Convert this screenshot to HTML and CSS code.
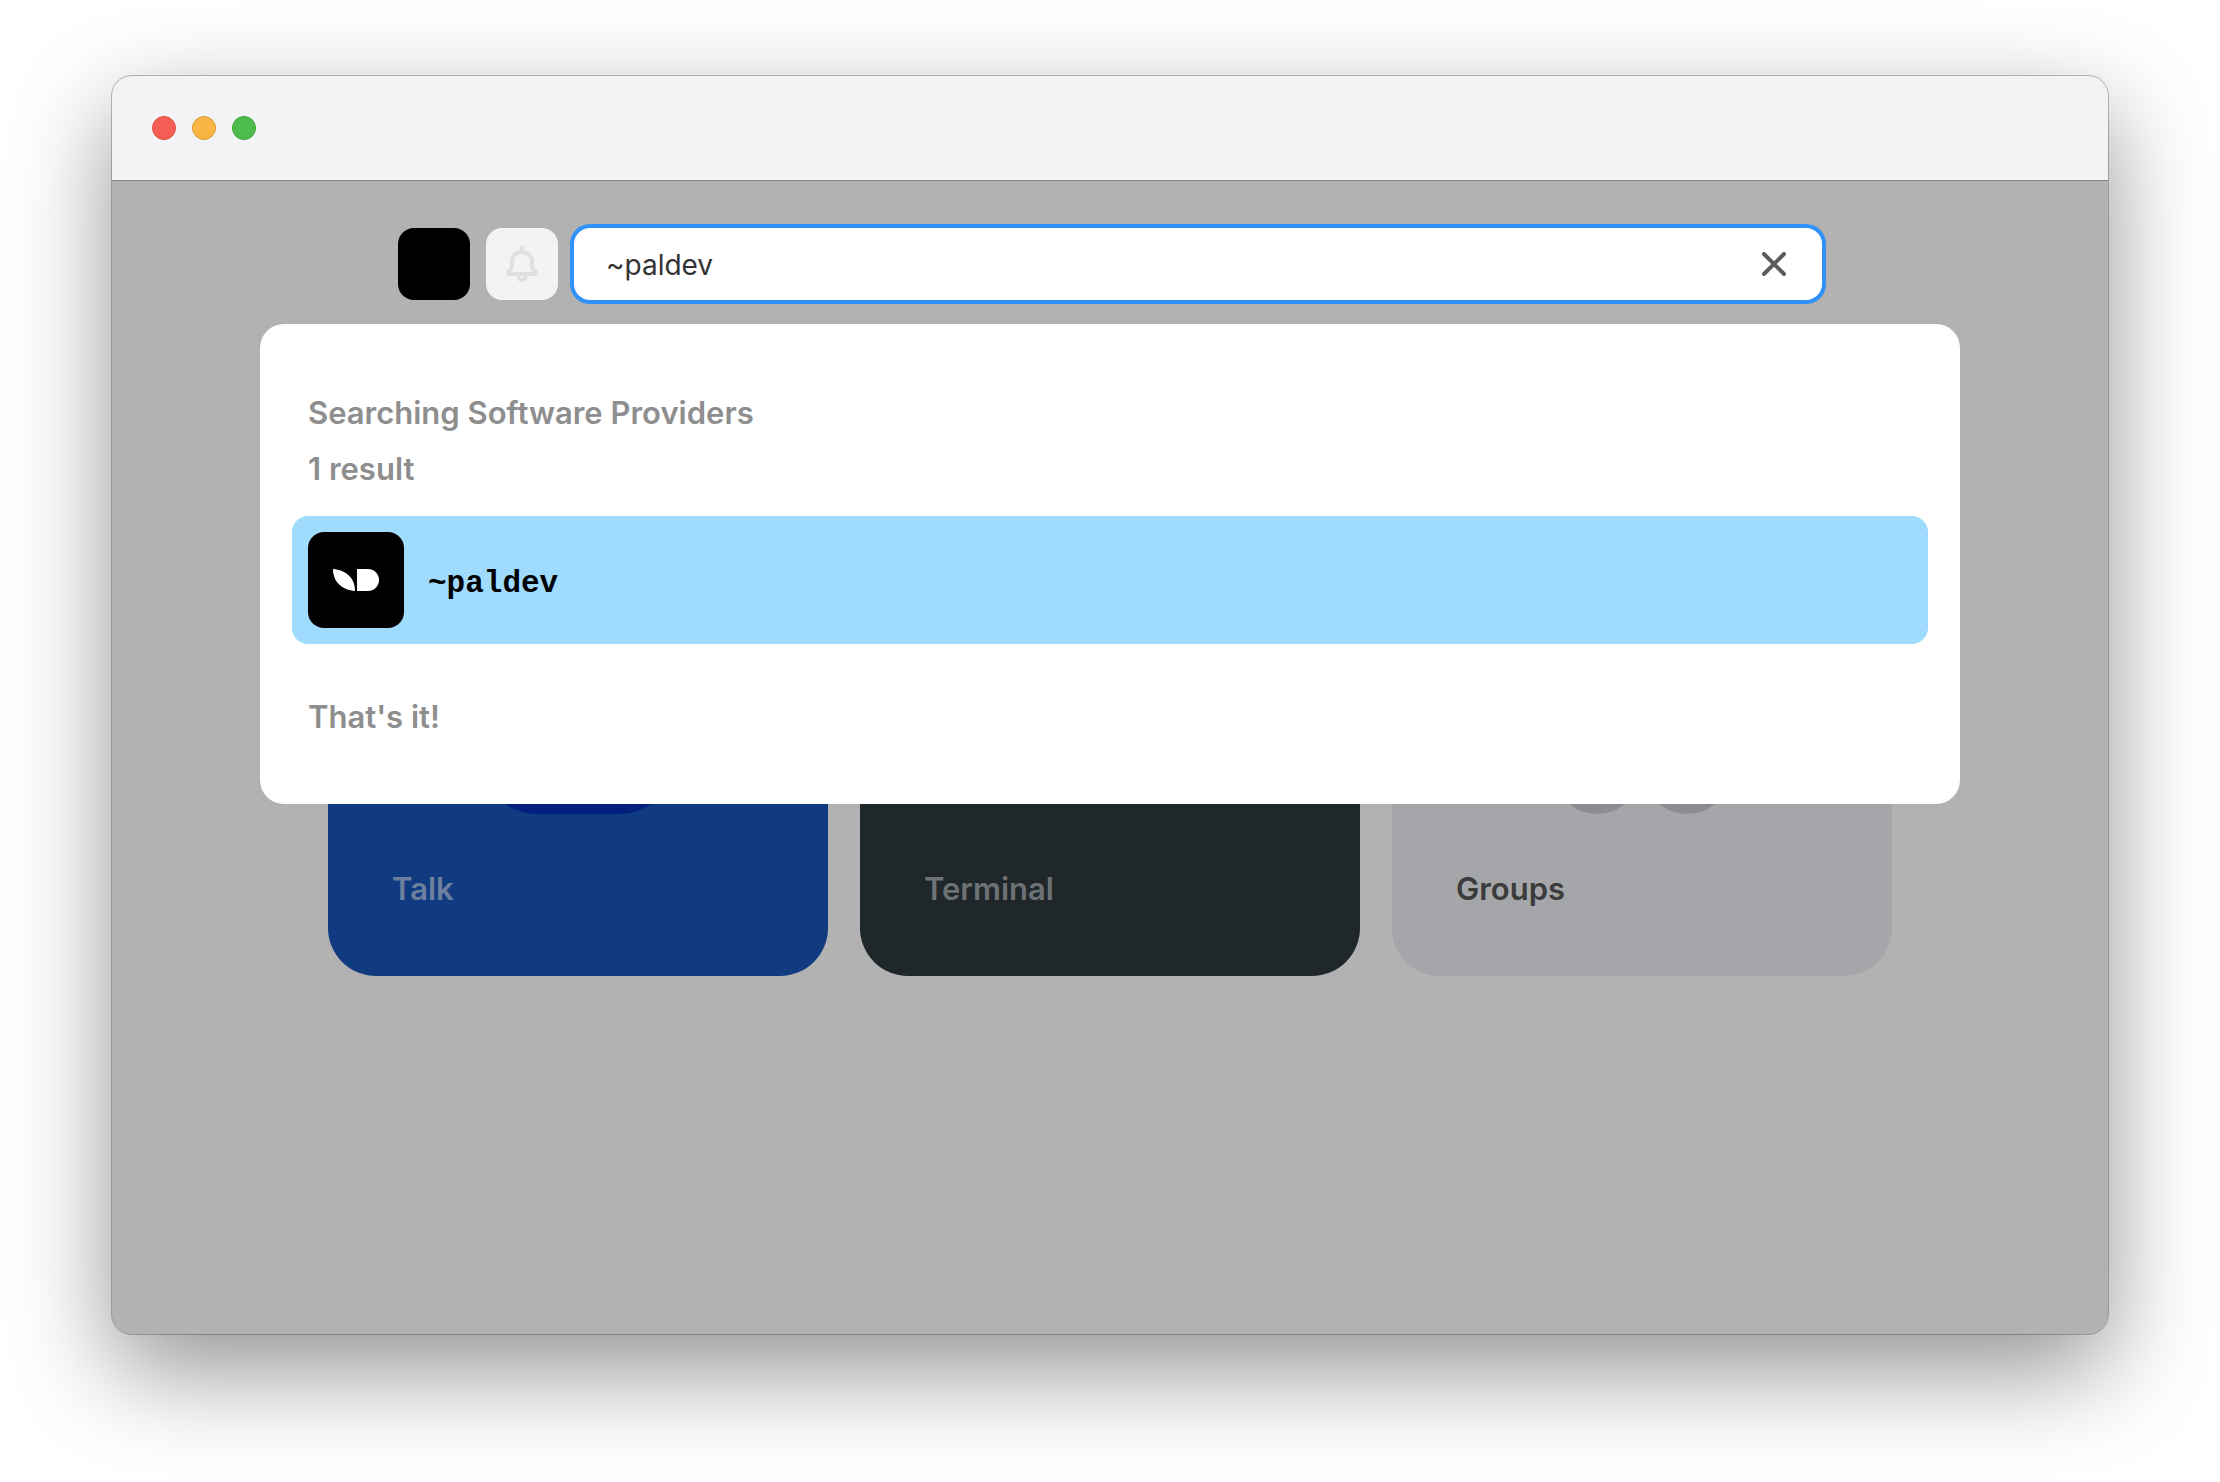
FILE: index.html
```html
<!DOCTYPE html>
<html lang="en">
<head>
  <meta charset="utf-8">
  <meta name="viewport" content="width=device-width, initial-scale=1">
  <title>Landscape</title>
  <link rel="stylesheet" href="styles.css">
</head>
<body>
  <div class="window">
    <header class="titlebar">
      <button type="button" class="light light-close" aria-label="Close window"></button>
      <button type="button" class="light light-minimize" aria-label="Minimize window"></button>
      <button type="button" class="light light-zoom" aria-label="Zoom window"></button>
    </header>

    <main class="desktop">
      <nav class="tiles" aria-label="Apps">
        <a href="#talk" class="tile tile-talk">
          <svg class="tile-icon" viewBox="0 0 200 200" aria-hidden="true"><rect width="200" height="200" rx="60" /></svg>
          <span class="tile-name">Talk</span>
        </a>
        <a href="#terminal" class="tile tile-terminal">
          <span class="tile-name">Terminal</span>
        </a>
        <a href="#groups" class="tile tile-groups">
          <svg class="tile-icon" viewBox="0 0 200 200" aria-hidden="true">
            <circle cx="55" cy="66" r="44" /><circle cx="145" cy="66" r="44" />
            <circle cx="55" cy="156" r="44" /><circle cx="145" cy="156" r="44" />
          </svg>
          <span class="tile-name">Groups</span>
        </a>
      </nav>

      <div class="leap">
        <div class="toolbar">
          <button type="button" class="square avatar" aria-label="System menu"></button>
          <button type="button" class="square bell" aria-label="Notifications">
            <svg width="36" height="36" viewBox="0 0 36 36" fill="none" stroke="currentColor" stroke-width="4" aria-hidden="true">
              <path d="M18 0v6" />
              <path d="M18 6c-6 0-10 4-10 10v4c0 3-1 4-3 5s-1 3 0 3h26c1 0 2-2 0-3s-3-2-3-5v-4c0-6-4-10-10-10z" stroke-linejoin="round" />
              <path d="M14 29a4 5 0 0 0 8 0" />
            </svg>
          </button>
          <form class="search" role="search">
            <input type="text" class="search-input" aria-label="Search" value="~paldev">
            <button type="reset" class="clear" aria-label="Clear search">
              <svg width="24" height="24" viewBox="0 0 24 24" fill="none" stroke="currentColor" stroke-width="4" stroke-linecap="round" aria-hidden="true">
                <path d="M2 2l20 20M22 2L2 22" />
              </svg>
            </button>
          </form>
        </div>

        <section class="panel">
          <div class="panel-head">
            <h1 class="label">Searching Software Providers</h1>
            <p class="label">1 result</p>
          </div>
          <a href="#paldev" class="result">
            <svg class="sigil" width="96" height="96" viewBox="0 0 96 96" aria-hidden="true">
              <path d="M25 37C38 38 47 46 47 59C34 58 25 50 25 37z" />
              <path d="M49 37h11a11 11 0 0 1 0 22H49z" />
            </svg>
            <span class="ship">~paldev</span>
          </a>
          <p class="label panel-end">That's it!</p>
        </section>
      </div>
    </main>
  </div>
</body>
</html>
```
FILE: styles.css
```css
*,
*::before,
*::after {
  box-sizing: border-box;
}

body {
  margin: 0;
  padding: 76px 112px 148px;
  background: #fff;
  font-family: Inter, "Liberation Sans", sans-serif;
  font-size: 31px;
  line-height: 48px;
}

button {
  padding: 0;
  border: 0;
  font: inherit;
}

a {
  color: inherit;
  text-decoration: none;
}

h1,
p {
  margin: 0;
}

.window {
  display: flex;
  flex-direction: column;
  min-height: calc(100vh - 224px);
  border-radius: 20px;
  background: #b2b2b2;
  box-shadow: 0 0 0 1px rgba(0, 0, 0, 0.25), 0 36px 100px rgba(0, 0, 0, 0.43);
  overflow: hidden;
}

.titlebar {
  display: flex;
  align-items: center;
  gap: 16px;
  height: 105px;
  padding: 0 40px;
  border-bottom: 1px solid #868686;
  background: #f2f3f5;
}

.light {
  width: 24px;
  height: 24px;
  border: 1px solid;
  border-radius: 50%;
}

.light-close {
  border-color: #e0493f;
  background: #f35f54;
}

.light-minimize {
  border-color: #dc9a36;
  background: #f8b544;
}

.light-zoom {
  border-color: #37a337;
  background: #4dbc4a;
}

.desktop {
  position: relative;
  flex: 1;
  padding: 295px 68px 96px;
}

.tiles {
  display: grid;
  grid-template-columns: repeat(3, 1fr);
  gap: 32px;
  max-width: 1564px;
  margin: 0 auto;
}

.tile {
  display: flex;
  flex-direction: column;
  justify-content: flex-end;
  height: 500px;
  padding: 64px;
  border-radius: 48px;
}

.tile-icon {
  align-self: center;
  width: 200px;
  height: 200px;
  margin-bottom: 50px;
}

.tile-name,
.label {
  padding-top: 2px;
  font-size: 31px;
  font-weight: 600;
  line-height: 46px;
}

.tile-talk {
  background: #113b80;
  color: #6d809f;
}

.tile-talk .tile-icon {
  fill: #04207e;
}

.tile-terminal {
  background: #1f272b;
  color: #6d7275;
}

.tile-groups {
  background: #a5a6aa;
  color: #3b3b3b;
}

.tile-groups .tile-icon {
  fill: #8c8d92;
}

/* Search overlay, floating above the app tiles */
.leap {
  position: absolute;
  inset: 0;
  display: flex;
  flex-direction: column;
  align-items: center;
  gap: 24px;
  padding: 47px 68px;
}

.toolbar {
  display: flex;
  gap: 16px;
  width: 100%;
  max-width: 1424px;
}

.square {
  display: grid;
  place-items: center;
  flex: none;
  width: 72px;
  height: 72px;
  border-radius: 16px;
}

.avatar {
  background: #000;
}

.bell {
  background: #f3f3f3;
  color: #e0e0e0;
}

.search {
  display: flex;
  align-items: center;
  flex: 1;
  height: 72px;
  padding: 0 24px 0 32px;
  border-radius: 16px;
  background: #fff;
  box-shadow: 0 0 0 4px #3092f8;
}

.search-input {
  flex: 1;
  min-width: 0;
  padding: 2px 0 0;
  border: 0;
  outline: 0;
  background: none;
  color: #333;
  font: inherit;
  font-size: 28px;
}

.clear {
  display: grid;
  place-items: center;
  width: 48px;
  height: 48px;
  background: none;
  color: #5c5c5c;
}

.panel {
  display: flex;
  flex-direction: column;
  width: 100%;
  max-width: 1700px;
  padding: 64px 32px;
  border-radius: 24px;
  background: #fff;
}

.panel-head {
  display: grid;
  gap: 8px;
  margin-bottom: 24px;
}

.label {
  padding-left: 16px;
  padding-right: 16px;
  color: #8e8e8e;
}

.panel-end {
  margin-top: 48px;
}

.result {
  display: flex;
  align-items: center;
  gap: 24px;
  padding: 16px;
  border-radius: 16px;
  background: #9edbfe;
}

.sigil {
  border-radius: 16px;
  background: #000;
  fill: #fff;
}

.ship {
  padding-top: 8px;
  color: #000;
  font-family: "Liberation Mono", "Courier New", monospace;
  font-size: 31px;
  font-weight: 700;
}
```
